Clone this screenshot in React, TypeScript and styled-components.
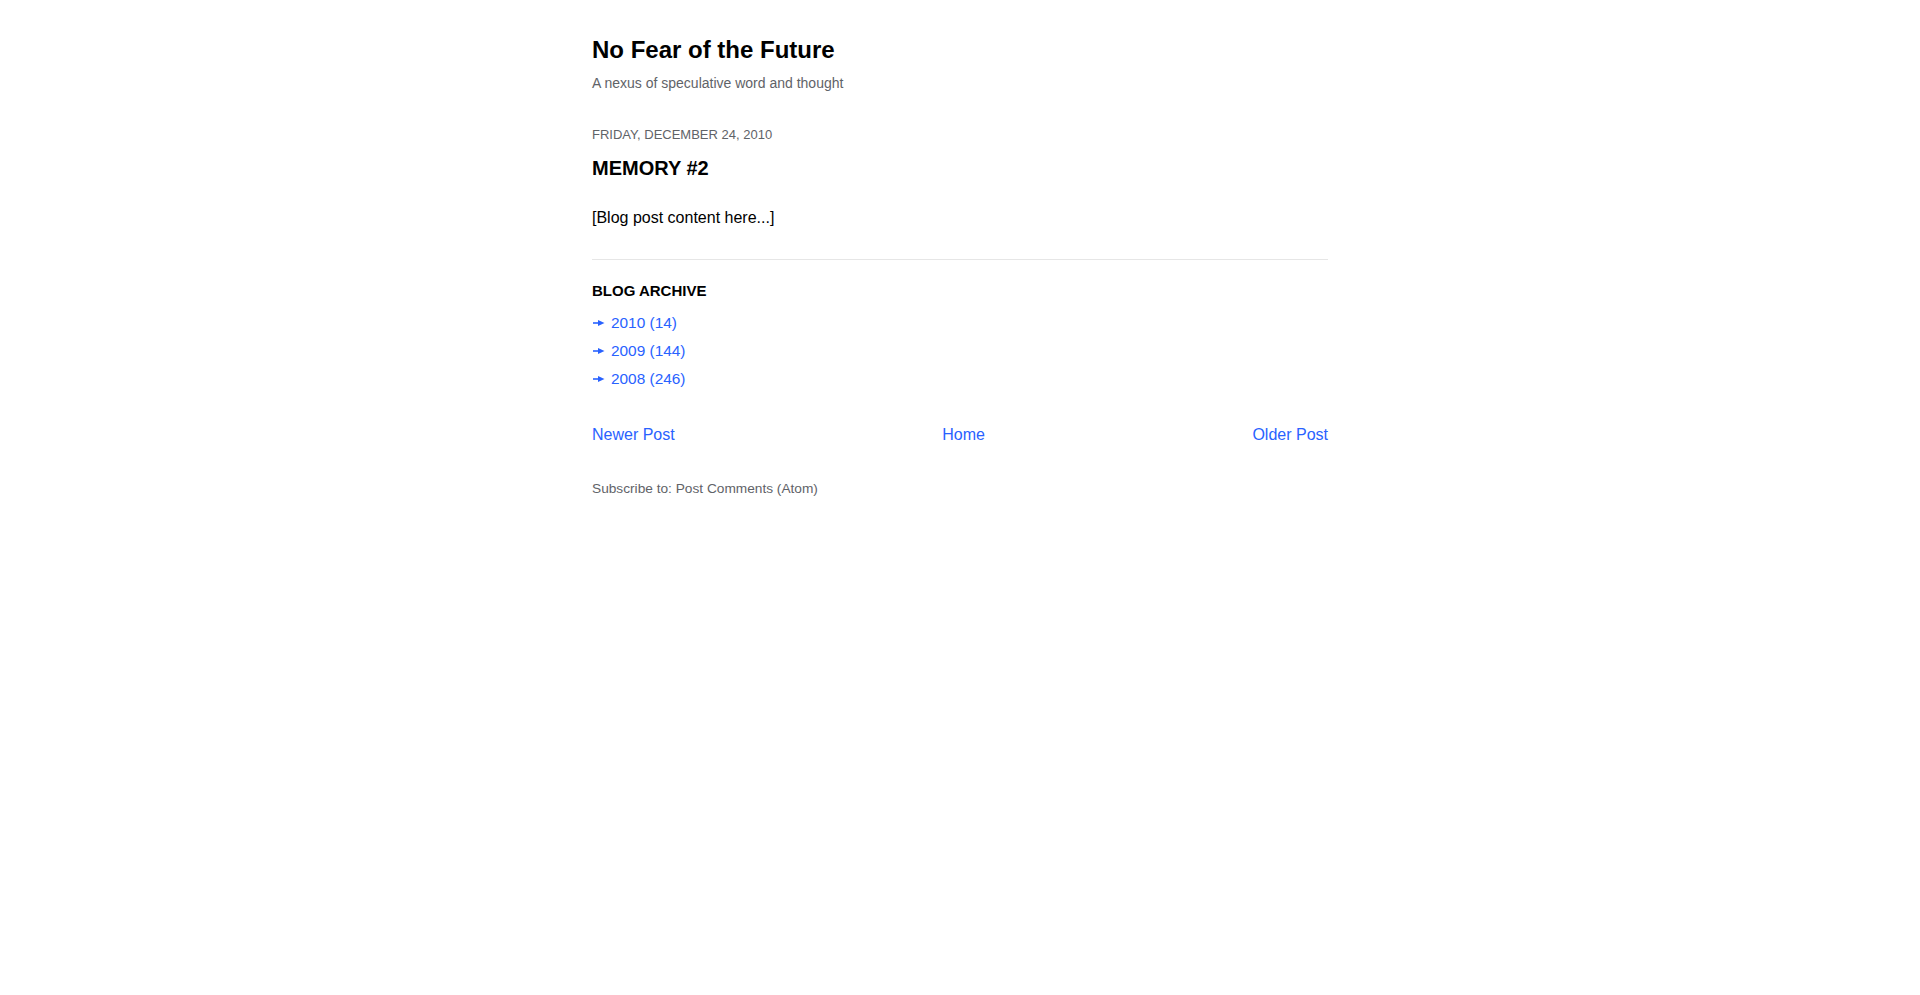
import React from "react";
import styled, { createGlobalStyle } from "styled-components";

const GlobalStyle = createGlobalStyle`
  html, body {
    margin: 0;
    padding: 0;
    background: #ffffff;
  }
  body {
    font-family: "Liberation Sans", Arial, sans-serif;
    color: #000000;
  }
`;

const Page = styled.div`
  width: 736px;
  margin: 0 auto;
  padding: 34px 0 40px;
  display: flex;
  flex-direction: column;
`;

const Header = styled.header`
  display: flex;
  flex-direction: column;
  gap: 7px;
`;

const BlogTitle = styled.h1`
  margin: 0;
  font-size: 24px;
  line-height: 32px;
  font-weight: 700;
  color: #000000;
`;

const Tagline = styled.p`
  margin: 0;
  font-size: 14px;
  line-height: 20px;
  color: #5f6368;
`;

const Post = styled.article`
  margin-top: 33px;
  display: flex;
  flex-direction: column;
`;

const PostDate = styled.div`
  font-size: 13px;
  line-height: 18px;
  color: #5f6368;
  text-transform: uppercase;
`;

const PostTitle = styled.h2`
  margin: 10px 0 0;
  font-size: 20px;
  line-height: 28px;
  font-weight: 700;
  text-transform: uppercase;
`;

const PostBody = styled.div`
  margin-top: 24px;
  font-size: 16px;
  line-height: 24px;
  color: #000000;
`;

const Divider = styled.hr`
  margin: 29px 0 0;
  border: 0;
  border-top: 1px solid #e6e6e6;
  height: 0;
`;

const Archive = styled.section`
  margin-top: 21px;
  display: flex;
  flex-direction: column;
`;

const WidgetTitle = styled.h3`
  margin: 0;
  font-size: 15px;
  line-height: 20px;
  font-weight: 700;
  text-transform: uppercase;
`;

const ArchiveList = styled.ul`
  list-style: none;
  margin: 8px 0 0;
  padding: 0;
`;

const ArchiveItem = styled.li`
  display: flex;
  align-items: center;
  height: 28px;
  font-size: 15.4px;
`;

const Toggle = styled.span`
  display: inline-flex;
  align-items: center;
  width: 18px;
  padding-left: 1px;
  color: #2962ff;
`;

const Link = styled.a`
  color: #2962ff;
  text-decoration: none;
`;

const Nav = styled.nav`
  margin-top: 30px;
  display: flex;
  justify-content: space-between;
  font-size: 16px;
  line-height: 24px;
`;

const Feed = styled.div`
  margin-top: 32px;
  font-size: 13.7px;
  line-height: 20px;
  color: #5f6368;
`;

const FeedLink = styled.a`
  color: #5f6368;
  text-decoration: none;
`;

const ToggleArrow = () => (
  <svg width="12" height="8" viewBox="0 0 12 8" aria-hidden="true">
    <path d="M0 4 H6" stroke="currentColor" strokeWidth="1.6" />
    <path d="M5 1 L11.5 4 L5 7 Z" fill="currentColor" />
  </svg>
);

const archive = [
  { year: "2010", count: 14 },
  { year: "2009", count: 144 },
  { year: "2008", count: 246 },
];

export default function App() {
  return (
    <>
      <GlobalStyle />
      <Page>
        <Header>
          <BlogTitle>No Fear of the Future</BlogTitle>
          <Tagline>A nexus of speculative word and thought</Tagline>
        </Header>

        <Post>
          <PostDate>Friday, December 24, 2010</PostDate>
          <PostTitle>Memory #2</PostTitle>
          <PostBody>[Blog post content here...]</PostBody>
        </Post>

        <Divider />

        <Archive>
          <WidgetTitle>Blog Archive</WidgetTitle>
          <ArchiveList>
            {archive.map((a) => (
              <ArchiveItem key={a.year}>
                <Toggle>
                  <ToggleArrow />
                </Toggle>
                <Link href="#">
                  {a.year} ({a.count})
                </Link>
              </ArchiveItem>
            ))}
          </ArchiveList>
        </Archive>

        <Nav>
          <Link href="#">Newer Post</Link>
          <Link href="#">Home</Link>
          <Link href="#">Older Post</Link>
        </Nav>

        <Feed>
          Subscribe to: <FeedLink href="#">Post Comments (Atom)</FeedLink>
        </Feed>
      </Page>
    </>
  );
}
